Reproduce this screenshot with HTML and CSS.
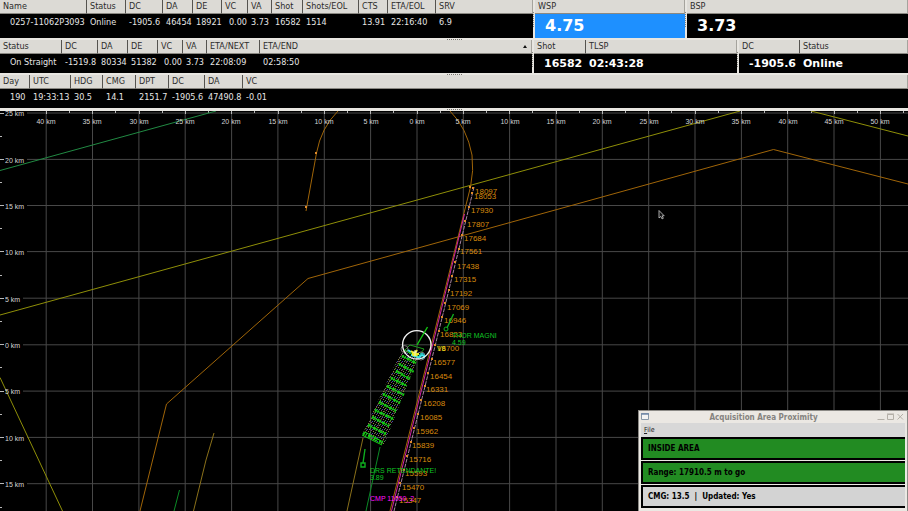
FILE: index.html
```
<!DOCTYPE html>
<html lang="en">
<head>
<meta charset="utf-8">
<title>Survey Navigation</title>
<link rel="stylesheet" href="styles.css">
</head>
<body>
<main class="screen">
  <div class="row row-line">
    <section class="pane grip-bottom">
      <table class="grid">
        <colgroup><col style="width:87px"><col style="width:39px"><col style="width:37px"><col style="width:30px"><col style="width:29px"><col style="width:26px"><col style="width:24px"><col style="width:31px"><col style="width:56px"><col style="width:29px"><col style="width:48px"><col></colgroup>
        <thead><tr><th>Name</th><th>Status</th><th>DC</th><th>DA</th><th>DE</th><th>VC</th><th>VA</th><th>Shot</th><th>Shots/EOL</th><th>CTS</th><th>ETA/EOL</th><th>SRV</th></tr></thead>
        <tbody><tr><td>0257-11062P3093</td><td>Online</td><td>-1905.6</td><td>46454</td><td>18921</td><td class="num">0.00</td><td>3.73</td><td>16582</td><td>1514</td><td>13.91</td><td>22:16:40</td><td>6.9</td></tr></tbody>
      </table>
    </section>
    <section class="pane grip-left">
      <table class="grid big active">
        <thead><tr><th>WSP</th></tr></thead>
        <tbody><tr><td>4.75</td></tr></tbody>
      </table>
    </section>
    <section class="pane grip-left">
      <table class="grid big">
        <thead><tr><th>BSP</th></tr></thead>
        <tbody><tr><td>3.73</td></tr></tbody>
      </table>
    </section>
  </div>
  <div class="row row-next">
    <section class="pane grip-bottom">
      <table class="grid">
        <colgroup><col style="width:62px"><col style="width:36px"><col style="width:30px"><col style="width:30px"><col style="width:25px"><col style="width:24px"><col style="width:53px"><col></colgroup>
        <thead><tr><th>Status</th><th>DC</th><th>DA</th><th>DE</th><th>VC</th><th>VA</th><th>ETA/NEXT</th><th class="sorted">ETA/END</th></tr></thead>
        <tbody><tr><td>On Straight</td><td>-1519.8</td><td>80334</td><td>51382</td><td class="num">0.00</td><td>3.73</td><td>22:08:09</td><td>02:58:50</td></tr></tbody>
      </table>
    </section>
    <section class="pane grip-left">
      <table class="grid mid">
        <colgroup><col style="width:52px"><col></colgroup>
        <thead><tr><th>Shot</th><th>TLSP</th></tr></thead>
        <tbody><tr><td>16582</td><td>02:43:28</td></tr></tbody>
      </table>
    </section>
    <section class="pane grip-left">
      <table class="grid mid">
        <colgroup><col style="width:61px"><col></colgroup>
        <thead><tr><th>DC</th><th>Status</th></tr></thead>
        <tbody><tr><td>-1905.6</td><td>Online</td></tr></tbody>
      </table>
    </section>
  </div>
  <div class="row row-ship">
    <section class="pane grip-bottom">
      <table class="grid">
        <colgroup><col style="width:30px"><col style="width:41px"><col style="width:32px"><col style="width:33px"><col style="width:33px"><col style="width:36px"><col style="width:38px"><col></colgroup>
        <thead><tr><th>Day</th><th>UTC</th><th>HDG</th><th>CMG</th><th>DPT</th><th>DC</th><th>DA</th><th>VC</th></tr></thead>
        <tbody><tr><td>190</td><td>19:33:13</td><td>30.5</td><td>14.1</td><td>2151.7</td><td>-1905.6</td><td>47490.8</td><td>-0.01</td></tr></tbody>
      </table>
    </section>
  </div>

  <section class="map">
    <svg class="chart" viewBox="0 111 908 400" preserveAspectRatio="xMidYMid slice" role="img" aria-label="Navigation chart">
      <defs>
        <pattern id="mesh" width="5" height="4" patternUnits="userSpaceOnUse">
          <rect width="1" height="1" fill="#3c9a3c"/><rect x="2" y="1" width="1" height="1" fill="#3c44b0"/><rect x="3" y="3" width="1" height="1" fill="#84843a"/><rect x="1" y="2" width="1" height="1" fill="#80466c"/><rect x="4" y="1" width="1" height="1" fill="#666"/>
        </pattern>
        <rect id="wp" x="-1" y="-1" width="2" height="2"/>
      </defs>
      <path class="mesh-line" d="M46.2 111V511M92.5 111V511M138.9 111V511M185.2 111V511M231.6 111V511M277.9 111V511M324.3 111V511M370.6 111V511M417 111V511M463.3 111V511M509.6 111V511M556 111V511M602.3 111V511M648.7 111V511M695 111V511M741.4 111V511M787.7 111V511M834 111V511M880.4 111V511"/>
      <path class="mesh-line" d="M27 113H908M27 159.4H908M27 205.5H908M27 251.6H908M23 298.2H908M23 344.8H908M23 391.1H908M27 437.4H908M27 483.7H908"/>
      <path class="tick" d="M0 113.500H4M0 159.500H4M0 205.500H4M0 251.500H4M0 298.500H4M0 344.500H4M0 391.500H4M0 437.500H4M0 483.500H4M0 136.500H2M0 182.500H2M0 228.500H2M0 275.500H2M0 321.500H2M0 367.500H2M0 414.500H2M0 460.500H2M0 507.500H2"/>
      <path class="tick" d="M46.500 111v3M92.500 111v3M139.500 111v3M185.500 111v3M231.500 111v3M278.500 111v3M324.500 111v3M370.500 111v3M417.500 111v3M463.500 111v3M509.500 111v3M556.500 111v3M602.500 111v3M648.500 111v3M695.500 111v3M741.500 111v3M787.500 111v3M834.500 111v3M880.500 111v3M69.500 111v2M115.500 111v2M162.500 111v2M208.500 111v2M254.500 111v2M301.500 111v2M347.500 111v2M393.500 111v2M440.500 111v2M486.500 111v2M532.500 111v2M579.500 111v2M625.500 111v2M671.500 111v2M718.500 111v2M764.500 111v2M811.500 111v2M857.500 111v2M903.500 111v2"/>

      <g class="line">
        <path stroke="#218a43" d="M0 170.500L216 111"/>
        <path stroke="#8f8f08" d="M0 315L740 111M811 111L908 136M0 377.500L62.500 511"/>
        <path stroke="#a06508" d="M140 511L166.500 404L308 278.500L773.500 149.500L908 184"/>
        <path stroke="#a06508" d="M306 211L316.500 153Q321 128 338 111M450 111Q467 128 472 155Q474 170 470.500 187L463.500 215L440 310L390 511"/>
        <path stroke="#8a701a" d="M214 433L206 460L193.500 511M363 438L347 511"/>
        <path stroke="#0b8a26" d="M179.500 490L174 511M380 447L366 511"/>
        <path stroke="#d020a8" d="M464.500 214L441 311L391.500 511"/>
        <path stroke="#a884a0" stroke-dasharray="4 1" d="M474 187L444 310L394 511"/>
      </g>

      <g class="axis top">
        <text x="46" y="124">40 km</text><text x="92" y="124">35 km</text><text x="139" y="124">30 km</text><text x="185" y="124">25 km</text><text x="231" y="124">20 km</text><text x="278" y="124">15 km</text><text x="324" y="124">10 km</text><text x="371" y="124">5 km</text><text x="417" y="124">0 km</text><text x="463" y="124">5 km</text><text x="510" y="124">10 km</text><text x="556" y="124">15 km</text><text x="602" y="124">20 km</text><text x="649" y="124">25 km</text><text x="695" y="124">30 km</text><text x="741" y="124">35 km</text><text x="788" y="124">40 km</text><text x="834" y="124">45 km</text><text x="880" y="124">50 km</text>
      </g>
      <g class="axis">
        <text x="5" y="116">25 km</text><text x="5" y="163">20 km</text><text x="5" y="209">15 km</text><text x="5" y="255">10 km</text><text x="5" y="302">5 km</text><text x="5" y="348">0 km</text><text x="5" y="394">5 km</text><text x="5" y="441">10 km</text><text x="5" y="487">15 km</text>
      </g>

      <g fill="#e08a2a">
        <use href="#wp" x="316" y="153"/><use href="#wp" x="306" y="207"/><use href="#wp" x="470" y="187"/>
        <use href="#wp" x="473" y="188"/><use href="#wp" x="472" y="193"/><use href="#wp" x="469" y="207"/><use href="#wp" x="465" y="221"/><use href="#wp" x="462" y="235"/><use href="#wp" x="459" y="249"/><use href="#wp" x="455" y="262"/><use href="#wp" x="452" y="276"/><use href="#wp" x="449" y="290"/><use href="#wp" x="445" y="303"/><use href="#wp" x="442" y="317"/><use href="#wp" x="439" y="331"/><use href="#wp" x="435" y="345"/><use href="#wp" x="432" y="359"/><use href="#wp" x="428" y="373"/><use href="#wp" x="425" y="386"/><use href="#wp" x="421" y="400"/><use href="#wp" x="418" y="414"/><use href="#wp" x="414" y="428"/><use href="#wp" x="411" y="442"/><use href="#wp" x="407" y="456"/><use href="#wp" x="404" y="470"/><use href="#wp" x="400" y="483"/><use href="#wp" x="397" y="497"/>
      </g>
      <g class="shots">
        <text x="475" y="194">18097</text><text x="474" y="199">18053</text><text x="471" y="213">17930</text><text x="467" y="227">17807</text><text x="464" y="241">17684</text><text x="460" y="254">17561</text><text x="457" y="269">17438</text><text x="454" y="282">17315</text><text x="450" y="296">17192</text><text x="447" y="310">17069</text><text x="444" y="323">16946</text><text x="440" y="337">16823</text><text x="437" y="351">16700</text><text x="433" y="365">16577</text><text x="430" y="379">16454</text><text x="426" y="392">16331</text><text x="423" y="406">16208</text><text x="420" y="420">16085</text><text x="416" y="434">15962</text><text x="412" y="448">15839</text><text x="409" y="462">15716</text><text x="405" y="476">15593</text><text x="402" y="490">15470</text><text x="399" y="503">15347</text>
      </g>

      <g fill="none">
        <path fill="url(#mesh)" d="M402 350L418 357L384 445L362 435Z"/>
        <path stroke="#8a7a3a" stroke-dasharray="1 2" d="M404 350L363 436M410 353L372 440M417 357L381 445"/>
        <path class="birds" d="M404 350l13 7M402 356l14 7M399 364l15 8M396 371l14 8M391 378l16 8M387 386l17 9M383 394l17 9M379 402l17 9M375 410l18 9M372 417l17 9M368 425l18 9M362 435l20 10M365 432l18 10"/>
        <path class="fuzz" d="M402 356l14 7M399 364l15 8M396 371l14 8M391 378l16 8M387 386l17 9M383 394l17 9M379 402l17 9M375 410l18 9M372 417l17 9M368 425l18 9M363 433l20 10"/>
        <path stroke="#1c9a1c" d="M405 350L410 345L424 349L418 357Z"/>
        <circle cx="404.500" cy="349" r="3.500" stroke="#777"/>
        <circle cx="421" cy="356" r="4" stroke="#777"/>
        <path stroke="#3ce8e8" stroke-width="2" d="M408 350l3 2M411 355l7 2M418 358l4 -3l3 2"/>
        <circle cx="422" cy="356" r="2.500" stroke="#2ed8e8"/>
        <path stroke="#f0f028" stroke-width="2" d="M411 351l6 5M417 350l-4 6M412 354h7"/>
        <path stroke="#f8f8c0" d="M413 352h4M415 350v6"/>
        <circle cx="416.800" cy="344.800" r="14.200" stroke="#f4f4f4" stroke-width="1.300"/>
        <path stroke="#12c812" stroke-width="1.400" d="M417 345L427.500 327"/>
        <path stroke="#0fae1f" stroke-width="1.400" d="M453.500 314L447 328M365 449L363 463M361 463h4v4h-4z"/>
        <circle cx="446" cy="329" r="2" stroke="#0fae1f"/>
      </g>
      <text class="tag yellow" x="437" y="351">V8</text>
      <g class="tag green">
        <text x="452" y="338">THOR MAGNI</text><text x="452" y="345">4.59</text>
        <text x="370" y="473">DRS RETENDANTE!</text><text x="370" y="480">3.89</text>
      </g>
      <text class="tag magenta" x="370" y="501">CMP 11050_2</text>
      <path fill="#111" stroke="#ccc" stroke-width=".8" d="M659 210.500v7.500l1.800 -1.600l1.200 2.500l1.300 -.6l-1.100 -2.500h2z"/>
    </svg>

    <section class="dialog" aria-label="Acquisition Area Proximity">
      <header class="titlebar">
        <svg class="win-icon" viewBox="0 0 9 8"><path fill="#f4f4f4" stroke="#8898a8" d="M.5 .5h7v6h-7z"/><path stroke="#7088a8" stroke-width="1.500" d="M0 1h8"/></svg>
        <h1>Acquisition Area Proximity</h1>
        <svg class="win-buttons" viewBox="0 0 28 8" fill="none" stroke="#b4b0a8"><path d="M.5 6.500h7M10.500 1.500h6v5h-6zM10 1h7M20.500 1l5.500 5.500M26 1l-5.500 5.500"/></svg>
      </header>
      <nav class="menubar"><button type="button"><u>F</u>ile</button></nav>
      <p class="status ok">INSIDE AREA</p>
      <p class="status ok">Range: 17910.5 m to go</p>
      <p class="status">CMG: 13.5 &nbsp;|&nbsp; Updated: Yes</p>
    </section>
  </section>
</main>
</body>
</html>
```
FILE: styles.css
```
* { box-sizing: border-box; }

body {
  margin: 0;
  background: #000;
  font-family: "DejaVu Sans Condensed", "DejaVu Sans", sans-serif;
  font-size: 9px;
  color: #e6e6e6;
}

.screen {
  display: flex;
  flex-direction: column;
  height: 100vh;
  overflow: hidden;
}

.row {
  display: grid;
  column-gap: 2px;
  background: #e8e6e1;
  padding-bottom: 2px;
}

.row-line { grid-template-columns: 533fr 150fr 221fr; height: 40px; }
.row-next { grid-template-columns: 532fr 203fr 169fr; height: 35px; }
.row-ship { grid-template-columns: 1fr; height: 36px; padding-bottom: 3px; }

.pane {
  position: relative;
  display: grid;
  min-width: 0;
  background: #000;
}

.grip-bottom::after,
.grip-left::before {
  content: "";
  position: absolute;
}

.grip-bottom::after {
  left: 447px;
  bottom: -2px;
  width: 16px;
  height: 1px;
  background: repeating-linear-gradient(90deg, #77756f 0 1px, transparent 1px 2px);
}

.grip-left::before {
  left: -2px;
  top: 12px;
  width: 1px;
  height: 16px;
  background: repeating-linear-gradient(#88867f 0 1px, transparent 1px 2px);
}

.grid {
  width: 100%;
  height: 100%;
  table-layout: fixed;
  border-collapse: separate;
  border-spacing: 0;
}

.grid th {
  height: 14px;
  padding: 0 0 0 3px;
  overflow: hidden;
  background: #dcdad5;
  border-right: 1px solid #55534f;
  border-bottom: 1px solid #8a8882;
  color: #2c2c2c;
  font-weight: normal;
  line-height: 13px;
  text-align: left;
  white-space: nowrap;
}

.grid th:last-child { border-right-color: #a5a39d; }

.grid td {
  padding: 2px 0 0 3px;
  line-height: 12px;
  vertical-align: top;
  white-space: nowrap;
}

.grid td:first-child { padding-left: 10px; }
.grid td.num { padding: 2px 1px 0 0; text-align: right; }

.sorted { position: relative; }

.sorted::after {
  content: "";
  position: absolute;
  right: 4px;
  top: 5px;
  border: 2px solid transparent;
  border-top: 0;
  border-bottom: 3px solid #111;
}

.big td,
.mid td {
  color: #fff;
  font-family: "DejaVu Sans", sans-serif;
  font-weight: bold;
}

.big td { font-size: 16px; line-height: 20px; }
.mid td { font-size: 11px; line-height: 16px; }
.active td { background: #1e90ff; }

.map {
  position: relative;
  flex: 1;
  min-height: 0;
}

.chart {
  display: block;
  width: 100%;
  height: 100%;
  font-family: "Liberation Sans", Arial, sans-serif;
}

.mesh-line { stroke: #484848; fill: none; }
.tick { stroke: #b8b8b8; fill: none; }
.line { fill: none; }
.axis { fill: #d4d4d4; font-size: 7px; }
.top { text-anchor: middle; }
.shots { fill: #d88a0c; font-size: 8px; }
.birds { stroke: #14d814; stroke-width: 1; }
.fuzz { stroke: #14c814; stroke-width: 3; stroke-dasharray: 2 1 1 2; }
.tag { font-size: 7px; }
.green { fill: #10c424; }
.yellow { fill: #e8e020; }
.magenta { fill: #ff10ff; }

.dialog {
  position: absolute;
  right: 0;
  bottom: 0;
  width: 270px;
  padding: 0 2px 2px;
  background: #ebe8e3;
  border: 1px solid #8c8a86;
  border-bottom: 0;
  color: #000;
}

.titlebar {
  display: flex;
  align-items: center;
  justify-content: space-between;
  height: 12px;
}

.titlebar h1 {
  margin: 0;
  color: #85837f;
  font-size: 8px;
  font-weight: bold;
}

.win-icon { width: 9px; height: 8px; }
.win-buttons { width: 28px; height: 8px; }

.menubar {
  display: flex;
  align-items: center;
  height: 14px;
  background: #d8d8d8;
}

.menubar button {
  padding: 0 3px;
  border: 0;
  background: none;
  color: #222;
  font: 7px/8px "DejaVu Sans Condensed", "DejaVu Sans", sans-serif;
}

.status {
  height: 23px;
  margin: 0 0 1px;
  padding: 0 5px;
  border: 2px solid #000;
  border-right: 0;
  background: #d3d3d3;
  font-size: 8px;
  font-weight: bold;
  line-height: 19px;
}

.ok { background: #228b22; }
```
